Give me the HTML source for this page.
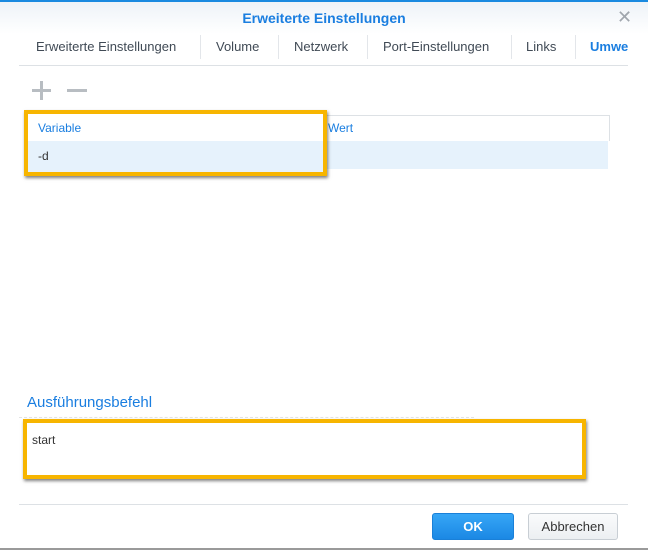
<!DOCTYPE html><html><head><style>
body{margin:0;width:648px;height:550px;background:#fff;font-family:"Liberation Sans",sans-serif;position:relative;overflow:hidden}
.a{position:absolute}
.tab{position:absolute;top:39px;font-size:13px;color:#404a55}
.sep{position:absolute;top:35px;width:1px;height:24px;background:#e3e6ea}
</style></head><body>
<div class="a" style="left:0;top:0;width:648px;height:2px;background:#1a8ae0"></div>
<div class="a" style="left:0;top:2px;width:648px;height:32px;background:linear-gradient(#eef3f8,#fff)"></div>
<div class="a" style="left:0;top:10px;width:648px;text-align:center;font-size:14px;font-weight:bold;color:#1a7ee0">Erweiterte Einstellungen</div>
<div class="a" style="left:617px;top:7px;font-size:18px;color:#a0a6ad">✕</div>
<div class="tab" style="left:36px">Erweiterte Einstellungen</div>
<div class="sep" style="left:200px"></div>
<div class="tab" style="left:216px">Volume</div>
<div class="sep" style="left:278px"></div>
<div class="tab" style="left:294px">Netzwerk</div>
<div class="sep" style="left:367px"></div>
<div class="tab" style="left:383px">Port-Einstellungen</div>
<div class="sep" style="left:511px"></div>
<div class="tab" style="left:526px">Links</div>
<div class="sep" style="left:575px"></div>
<div class="tab" style="left:590px;width:38px;overflow:hidden;white-space:nowrap;font-weight:bold;color:#1a7ee0">Umwelt</div>
<div class="a" style="left:19px;top:65px;width:609px;height:1px;background:#dde1e5"></div>
<div class="a" style="left:32px;top:89px;width:19px;height:3px;background:#b8bdc2"></div>
<div class="a" style="left:40px;top:81px;width:3px;height:19px;background:#b8bdc2"></div>
<div class="a" style="left:67px;top:89px;width:20px;height:3px;background:#b8bdc2"></div>
<div class="a" style="left:28px;top:115px;width:582px;height:1px;background:#dde1e5"></div>
<div class="a" style="left:609px;top:115px;width:1px;height:26px;background:#dde1e5"></div>
<div class="a" style="left:28px;top:141px;width:580px;height:28px;background:#e6f2fc"></div>
<div class="a" style="left:328px;top:121px;font-size:12px;color:#1a7ee0">Wert</div>
<div class="a" style="left:24px;top:110px;width:295px;height:58px;border:4px solid #f7b500;box-shadow:1px 2px 3px rgba(0,0,0,.5)">
<div class="a" style="left:0;top:0;width:295px;height:27px;background:#fff"></div>
<div class="a" style="left:0;top:27px;width:295px;height:31px;background:#e6f2fc"></div>
<div class="a" style="left:10px;top:7px;font-size:12px;color:#1a7ee0">Variable</div>
<div class="a" style="left:10px;top:35px;font-size:12px;color:#333">-d</div>
</div>
<div class="a" style="left:27px;top:394px;font-size:15px;color:#1a7ee0">Ausführungsbefehl</div>
<div class="a" style="left:19px;top:417px;width:455px;height:0;border-top:1px dashed #e4e4e4"></div>
<div class="a" style="left:23px;top:419px;width:555px;height:52px;border:4px solid #f7b500;background:#fff;box-shadow:1px 2px 3px rgba(0,0,0,.5)">
<div class="a" style="left:5px;top:10px;font-size:12px;color:#333">start</div></div>
<div class="a" style="left:19px;top:504px;width:609px;height:1px;background:#dde1e5"></div>
<div class="a" style="left:432px;top:513px;width:82px;height:27px;border-radius:3px;background:linear-gradient(#36a6f6,#1b88e4);border:1px solid #1a80d8;box-sizing:border-box;color:#fff;font-size:13px;font-weight:bold;text-align:center;line-height:25px">OK</div>
<div class="a" style="left:528px;top:513px;width:90px;height:27px;border-radius:3px;background:linear-gradient(#fafbfc,#eceff2);border:1px solid #c8ced4;box-sizing:border-box;color:#333;font-size:13px;text-align:center;line-height:25px">Abbrechen</div>
<div class="a" style="left:0;top:548px;width:648px;height:2px;background:#9a9a9a"></div>
</body></html>
